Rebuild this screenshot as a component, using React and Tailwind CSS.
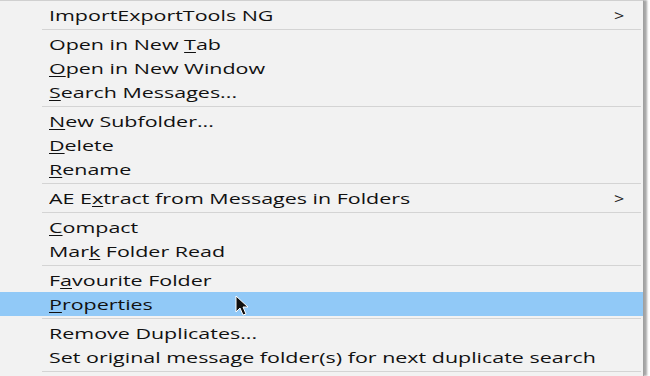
import React from 'react';

const items = [
  { label: 'ImportExportTools NG', sub: true },
  'sep',
  { label: 'Open in New Tab', key: 12 },
  { label: 'Open in New Window', key: 0 },
  { label: 'Search Messages...', key: 0 },
  'sep',
  { label: 'New Subfolder...', key: 0 },
  { label: 'Delete', key: 0 },
  { label: 'Rename', key: 0 },
  'sep',
  { label: 'AE Extract from Messages in Folders', key: 4, sub: true },
  'sep',
  { label: 'Compact', key: 0 },
  { label: 'Mark Folder Read', key: 3 },
  'sep',
  { label: 'Favourite Folder', key: 1 },
  { label: 'Properties', key: 0, active: true },
  'sep',
  { label: 'Remove Duplicates...' },
  { label: 'Set original message folder(s) for next duplicate search' },
  'sep',
];

function Label({ text, k }) {
  if (k === undefined) return text;
  return (
    <>
      {text.slice(0, k)}
      <span className="underline underline-offset-2">{text[k]}</span>
      {text.slice(k + 1)}
    </>
  );
}

function Cursor() {
  return (
    <svg className="absolute left-[235px] top-[295px]" width="16" height="22" viewBox="0 0 16 22">
      <path d="M1 1 L1 17 L5 13 L8 20 L11 19 L8 12 L13 12 Z" fill="#111" stroke="#fff" strokeWidth="1" />
    </svg>
  );
}

export default function App() {
  return (
    <div className="relative w-[650px] h-[376px] overflow-hidden bg-white" style={{ fontFamily: '"Open Sans", "Noto Sans", sans-serif' }}>
      <div className="w-[644px] h-[376px] bg-[#f2f2f2] border-t border-[#d0d0d0] border-r border-r-[#a0a0a0] shadow-[3px_0_2px_rgba(0,0,0,0.35)] pt-[2px]">
        {items.map((it, i) =>
          it === 'sep' ? (
            <div key={i} className="h-[5px] flex items-center pl-[42px] pr-[2px]">
              <div className="h-px w-full bg-[#d4d4d4]" />
            </div>
          ) : (
            <div
              key={i}
              className={`h-[24px] flex items-center pl-[49px] pr-[20px] text-[15px] text-[#111] ${it.active ? 'bg-[#91c9f7]' : ''}`}
            >
              <span className="flex-1 whitespace-nowrap">
                <span className="inline-block origin-left scale-x-[1.43]"><Label text={it.label} k={it.key} /></span>
              </span>
              {it.sub && <span className="inline-block origin-left scale-x-[1.2] text-[15px] text-[#222]">&gt;</span>}
            </div>
          )
        )}
      </div>
      <Cursor />
    </div>
  );
}
